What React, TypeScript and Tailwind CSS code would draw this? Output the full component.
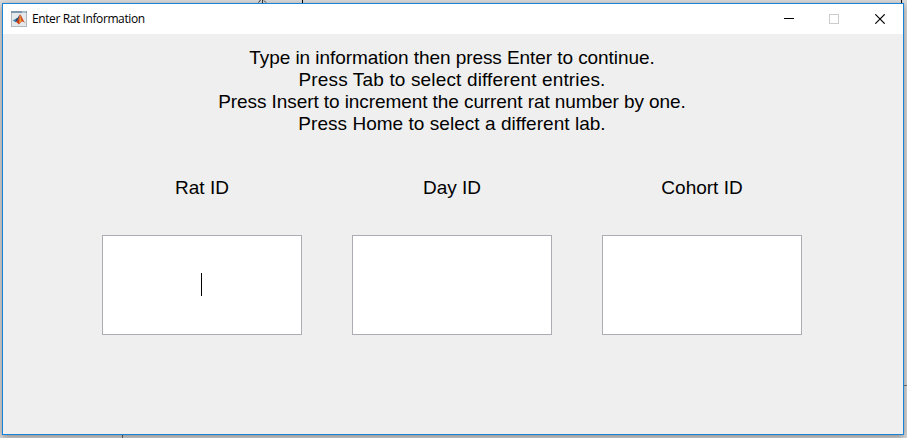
import React from "react";

const instructions = [
  { text: "Type in information then press Enter to continue.", tracking: "tracking-[-0.07px]" },
  { text: "Press Tab to select different entries.", tracking: "tracking-[0.15px]" },
  { text: "Press Insert to increment the current rat number by one.", tracking: "tracking-[-0.08px]" },
  { text: "Press Home to select a different lab.", tracking: "tracking-[0.04px]" },
];

const fields = ["Rat ID", "Day ID", "Cohort ID"];

function MatlabIcon() {
  return (
    <svg width="16" height="16" viewBox="0 0 16 16" className="shrink-0">
      <rect x="0.5" y="0.5" width="15" height="15" fill="#e4e9ec" stroke="#b0b8be" />
      <rect x="0" y="0" width="16" height="2" fill="#7d98ac" />
      <rect x="11" y="0.5" width="4" height="1" fill="#d5e2ea" />
      <path d="M1.7 9.5 5.2 7.6 6.7 9 4.7 11.2Z" fill="#3f7fae" />
      <path d="M5.2 7.6C7 7 7.7 4.5 9 3.2L7 9.6 4.7 11.2Z" fill="#27476f" />
      <path d="M9 3.2C8 6 7.5 9 4.9 11.2 6.2 11 7 12 7.6 13.5 9.7 12.6 9.9 10.5 11.2 10.3Z" fill="#c8401c" />
      <path d="M9 3.2C10.9 4.5 11.6 8.8 14.4 12.2 13 11.3 11.9 10 10.8 10.7Z" fill="#d24a1c" />
      <path d="M9 4.2C9.7 6 10 8.5 10.5 10.5L8.4 12.5C8.5 9.5 8.2 7 9 4.2Z" fill="#f2a33b" />
    </svg>
  );
}

function TitleBar() {
  return (
    <header className="flex h-[30px] shrink-0 items-center bg-white pl-2">
      <MatlabIcon />
      <h1 className="ml-[5px] grow text-[12px] leading-[16px] tracking-[-0.4px] whitespace-nowrap font-['Open_Sans','Noto_Sans',sans-serif]">
        Enter Rat Information
      </h1>
      <div className="flex h-full items-center pr-[17px]">
        <svg width="10" height="10" viewBox="0 0 10 10" shapeRendering="crispEdges">
          <path d="M0 4.5H10" stroke="#000" />
        </svg>
        <svg className="ml-[35px]" width="10" height="10" viewBox="0 0 10 10" shapeRendering="crispEdges">
          <path d="M.5.5H9.5V9.5H.5Z" fill="none" stroke="#ccc" />
        </svg>
        <svg className="ml-[36px]" width="11" height="10" viewBox="0 0 11 10">
          <path d="M.3.3 9.7 9.7M9.7.3.3 9.7" stroke="#000" strokeWidth="1.15" />
        </svg>
      </div>
    </header>
  );
}

export default function App() {
  return (
    <div className="relative h-[438px] w-[907px] overflow-hidden bg-[#dcdcdc] pt-[3px] pl-[2px] text-black">
      <div className="absolute top-0 left-[302px] h-[3px] w-px bg-black" />
      <div className="absolute top-0 left-[901px] h-[3px] w-px bg-black" />
      <div className="absolute top-[385px] left-[904px] h-px w-[3px] bg-[#777]" />
      <div className="absolute top-[435px] left-[122px] h-[3px] w-px bg-[#666]" />
      <svg className="absolute top-0 left-[258px]" width="9" height="3" viewBox="0 0 9 3">
        <path d="M2.5 0 .5 2.5M4.5 0V3M6 .5 8 2.5" stroke="#333" fill="none" />
      </svg>
      <div className="relative flex h-[432px] w-[902px] flex-col border border-[#1883d7] bg-[#efefef] shadow-[0_2px_7px_rgba(0,0,0,0.4)]">
        <TitleBar />
        <main className="flex grow flex-col pr-[2px] font-['Liberation_Sans',Arial,sans-serif] text-[19px] leading-[22px]">
          <div className="mt-[13px] text-center">
            {instructions.map(({ text, tracking }) => (
              <p key={text} className={tracking}>{text}</p>
            ))}
          </div>
          <div className="mt-[42px] flex justify-center gap-[50px]">
            {fields.map((field, index) => (
              <label key={field} className="flex w-[200px] flex-col items-center gap-[36px]">
                <span>{field}</span>
                <span className="flex h-[100px] w-full items-center justify-center border border-[#abadb3] bg-white">
                  {index === 0 && <span className="mr-px mb-px h-[23px] w-px bg-black" />}
                </span>
              </label>
            ))}
          </div>
        </main>
      </div>
    </div>
  );
}
